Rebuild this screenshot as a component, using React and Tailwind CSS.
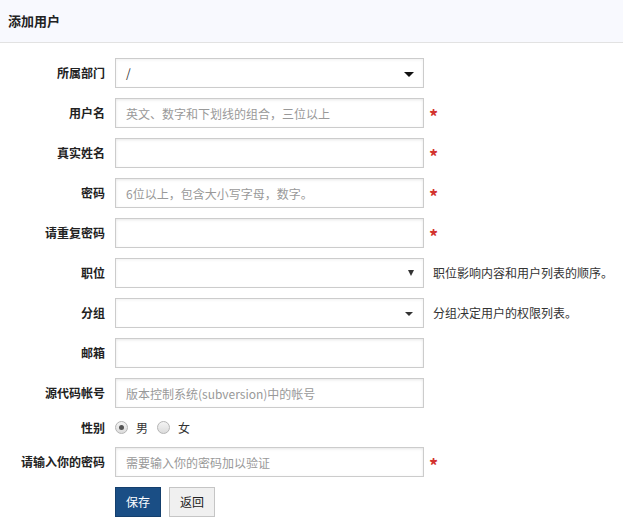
import React, { useState } from 'react';

const font = { fontFamily: '"Noto Sans CJK SC", "Liberation Sans", sans-serif' };

function Caret({ kind }) {
  if (kind === 'small') {
    return (
      <svg width="6" height="6" viewBox="0 0 6 6" className="absolute right-[9px] top-[11px]">
        <path d="M0 0 H6 L3 6 Z" fill="#333" />
      </svg>
    );
  }
  if (kind === 'thin') {
    return (
      <svg width="8" height="4" viewBox="0 0 8 4" className="absolute right-[10px] top-[13px]">
        <path d="M0 0 H8 L4 4 Z" fill="#333" />
      </svg>
    );
  }
  return (
    <svg width="10" height="5" viewBox="0 0 10 5" className="absolute right-[9px] top-[13px]">
      <path d="M0 0 H10 L5 5 Z" fill="#111" />
    </svg>
  );
}

function Star() {
  return <span className="ml-[5px] text-[18px] font-bold leading-none text-[#d2322d] pt-[5px]">*</span>;
}

function Row({ label, children, star, help }) {
  return (
    <div className="flex items-center h-[30px] mb-[10px]">
      <label className="w-[105px] text-right font-bold text-[12px] text-[#222] shrink-0">{label}</label>
      <div className="ml-[10px] flex items-center">
        {children}
        {star && <Star />}
        {help && <span className="ml-[9px] text-[12px] text-[#333]">{help}</span>}
      </div>
    </div>
  );
}

function TextInput({ placeholder, type = 'text' }) {
  return (
    <input
      type={type}
      placeholder={placeholder}
      className="w-[309px] h-[30px] border border-[#ccc] px-[10px] text-[12px] text-[#333] placeholder:text-[#999] shadow-[inset_0_1px_3px_rgba(0,0,0,0.1)] outline-none"
      style={font}
    />
  );
}

function SelectBox({ value, caret }) {
  return (
    <div className="relative w-[309px] h-[30px] border border-[#ccc] bg-white px-[10px] flex items-center text-[12px] text-[#333] shadow-[inset_0_1px_3px_rgba(0,0,0,0.06)]">
      {value}
      <Caret kind={caret} />
    </div>
  );
}

function Radio({ checked, onClick, label }) {
  return (
    <span className="flex items-center cursor-pointer" onClick={onClick}>
      <span className="w-[13px] h-[13px] rounded-full border border-[#b5b5b5] bg-gradient-to-b from-[#f4f4f4] to-[#dcdcdc] flex items-center justify-center">
        {checked && <span className="w-[5px] h-[5px] rounded-full bg-[#555]" />}
      </span>
      <span className="ml-[8px] text-[12px] text-[#333]">{label}</span>
    </span>
  );
}

export default function App() {
  const [gender, setGender] = useState('m');

  return (
    <div className="min-h-screen bg-white" style={font}>
      <div className="h-[43px] bg-[#f8f9fe] border-b border-[#e2e2e2] flex items-center px-[8px]">
        <h1 className="text-[13px] font-bold text-[#222]">添加用户</h1>
      </div>

      <form className="pt-[15px]" onSubmit={(e) => e.preventDefault()}>
        <Row label="所属部门">
          <SelectBox value="/" caret="big" />
        </Row>
        <Row label="用户名" star>
          <TextInput placeholder="英文、数字和下划线的组合，三位以上" />
        </Row>
        <Row label="真实姓名" star>
          <TextInput />
        </Row>
        <Row label="密码" star>
          <TextInput type="password" placeholder="6位以上，包含大小写字母，数字。" />
        </Row>
        <Row label="请重复密码" star>
          <TextInput type="password" />
        </Row>
        <Row label="职位" help="职位影响内容和用户列表的顺序。">
          <SelectBox value="" caret="small" />
        </Row>
        <Row label="分组" help="分组决定用户的权限列表。">
          <SelectBox value="" caret="thin" />
        </Row>
        <Row label="邮箱">
          <TextInput />
        </Row>
        <Row label="源代码帐号">
          <TextInput placeholder="版本控制系统(subversion)中的帐号" />
        </Row>

        <div className="flex items-center h-[19px] mb-[10px]">
          <label className="w-[105px] text-right font-bold text-[12px] text-[#222] shrink-0">性别</label>
          <div className="ml-[10px] flex items-center gap-[9px]">
            <Radio checked={gender === 'm'} onClick={() => setGender('m')} label="男" />
            <Radio checked={gender === 'f'} onClick={() => setGender('f')} label="女" />
          </div>
        </div>

        <Row label="请输入你的密码" star>
          <TextInput type="password" placeholder="需要输入你的密码加以验证" />
        </Row>

        <div className="flex items-center h-[30px] ml-[115px] gap-[8px]">
          <button type="submit" className="w-[46px] h-[30px] bg-[#1a4e85] border border-[#143f6d] text-white text-[12px]">保存</button>
          <button type="button" className="w-[46px] h-[30px] bg-[#f0f0f0] border border-[#c5c5c5] text-[#222] text-[12px]">返回</button>
        </div>
      </form>
    </div>
  );
}
